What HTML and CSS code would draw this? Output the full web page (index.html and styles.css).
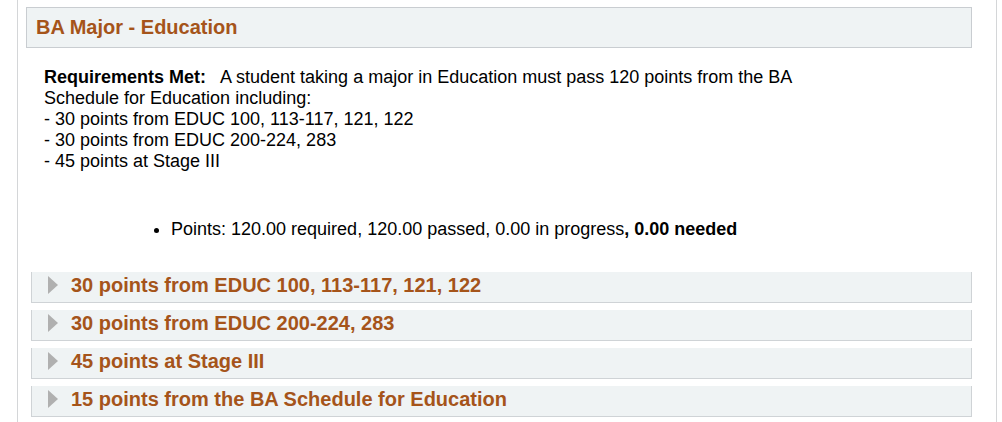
FILE: index.html
```html
<!DOCTYPE html>
<html>
<head>
<meta charset="utf-8">
<link rel="stylesheet" href="styles.css">
</head>
<body>
<div class="page">
  <div class="header">BA Major - Education</div>
  <div class="req">
    <b>Requirements Met:</b>&nbsp;&nbsp; A student taking a major in Education must pass 120 points from the BA<br>
    Schedule for Education including:<br>
    - 30 points from EDUC 100, 113-117, 121, 122<br>
    - 30 points from EDUC 200-224, 283<br>
    - 45 points at Stage III
  </div>
  <ul class="points">
    <li>Points: 120.00 required, 120.00 passed, 0.00 in progress<b>, 0.00 needed</b></li>
  </ul>
  <div class="groups">
    <div class="group"><span class="tri"></span><span class="gtitle">30 points from EDUC 100, 113-117, 121, 122</span></div>
    <div class="group"><span class="tri"></span><span class="gtitle">30 points from EDUC 200-224, 283</span></div>
    <div class="group"><span class="tri"></span><span class="gtitle">45 points at Stage III</span></div>
    <div class="group"><span class="tri"></span><span class="gtitle">15 points from the BA Schedule for Education</span></div>
  </div>
</div>
</body>
</html>
```
FILE: styles.css
```css
html, body {
  margin: 0;
  padding: 0;
  background: #ffffff;
}
body {
  font-family: "Liberation Sans", Arial, sans-serif;
  color: #000;
}
.page {
  margin-left: 17px;
  width: 978px;
  min-height: 422px;
  border-left: 1px solid #d4d6d8;
  border-right: 1px solid #d4d6d8;
  padding-top: 7px;
  box-sizing: content-box;
}
.header {
  margin-left: 8px;
  height: 39px;
  box-sizing: content-box;
  border: 1px solid #c9cdd1;
  background: #eff3f4;
  color: #a5541a;
  font-weight: bold;
  font-size: 20px;
  line-height: 38px;
  padding-left: 9px;
  width: 935px;
}
.req {
  margin: 19px 0 0 26px;
  font-size: 18px;
  line-height: 21px;
}
.points {
  margin: 47px 0 0 0;
  padding-left: 153px;
  font-size: 18px;
  line-height: 21px;
}
.groups {
  margin: 32px 0 0 13px;
  display: flex;
  flex-direction: column;
  gap: 7px;
}
.group {
  width: 941px;
  height: 31px;
  box-sizing: border-box;
  padding-bottom: 3px;
  background: #eff3f4;
  border-left: 1px solid #cfd3d6;
  border-right: 1px solid #cfd3d6;
  border-bottom: 1px solid #cfd3d6;
  display: flex;
  align-items: center;
}
.tri {
  width: 0;
  height: 0;
  margin-left: 16px;
  margin-bottom: 1px;
  border-top: 9px solid transparent;
  border-bottom: 9px solid transparent;
  border-left: 10px solid #b0b0b0;
}
.gtitle {
  margin-left: 13px;
  color: #a5541a;
  font-weight: bold;
  font-size: 20px;
}
```
